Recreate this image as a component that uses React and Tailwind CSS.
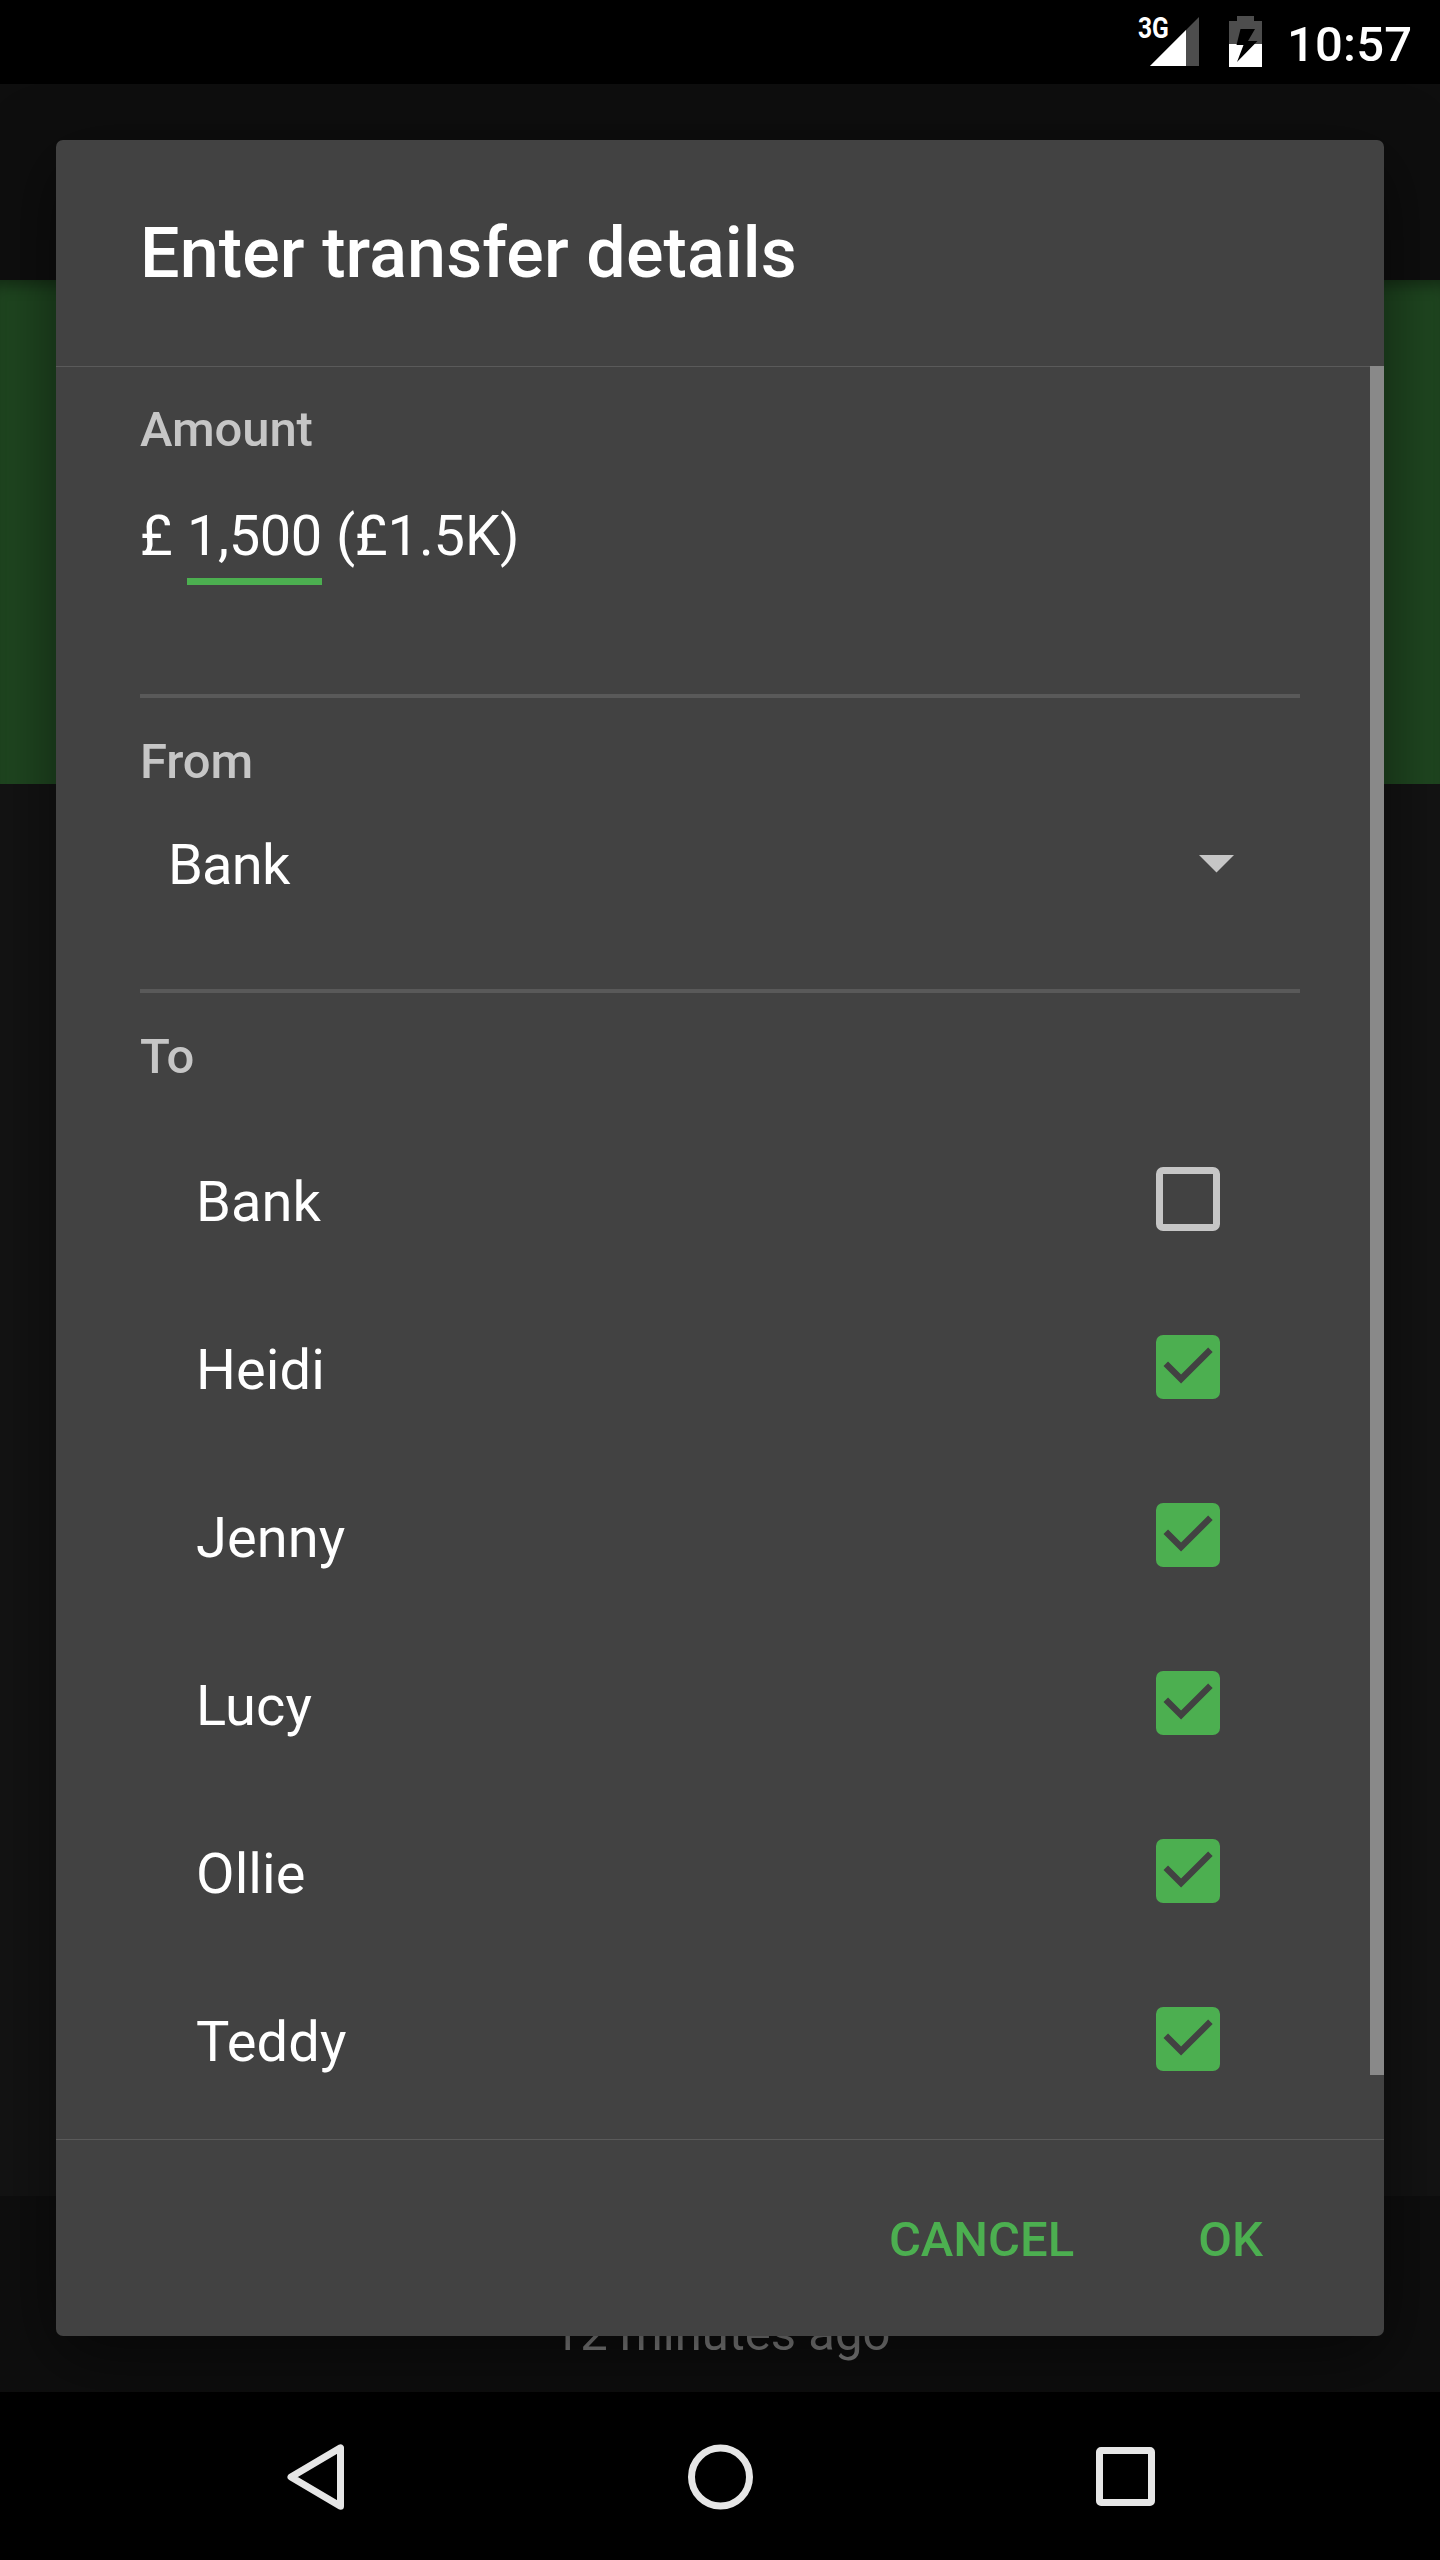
const people = [
  { name: "Bank", checked: false },
  { name: "Heidi", checked: true },
  { name: "Jenny", checked: true },
  { name: "Lucy", checked: true },
  { name: "Ollie", checked: true },
  { name: "Teddy", checked: true },
];

function StatusBar() {
  return (
    <header className="flex h-[84px] items-start bg-black pl-[1139px] text-white">
      <div className="relative h-[84px] w-[60px]">
        <span className="absolute -left-px top-[11px] origin-left scale-x-[0.82] text-[30px] font-bold leading-[34px]">3G</span>
        <svg className="absolute left-[11px] top-[17px]" width="49" height="49" viewBox="0 0 49 49">
          <path d="M49 0V49H0Z" fill="#4d4d4d" />
          <path d="M36 13V49H0Z" fill="#fff" />
        </svg>
      </div>
      <svg className="ml-[30px] mt-[16px]" width="33" height="51" viewBox="0 0 33 51">
        <path d="M8 0H25V5H33V28H0V5H8Z" fill="#4d4d4d" />
        <path d="M0 28H33V51H0Z" fill="#fff" />
        <path d="M11.5 13H26L19 25H28.500L8 46L14.500 29H7.500Z" fill="#000" />
      </svg>
      <span className="ml-[25px] mt-[16px] text-[49px] font-medium leading-[58px] tracking-[0.2px]">10:57</span>
    </header>
  );
}

function Checkbox({ checked }) {
  if (!checked) {
    return <span className="block size-[64px] rounded-[7px] border-[7px] border-[#c6c6c6]" />;
  }
  return (
    <svg width="64" height="64" viewBox="0 0 18 18">
      <rect width="18" height="18" rx="2" fill="#4caf50" />
      <path d="M2.750 8.100L7.050 12.400L15.300 4.150" fill="none" stroke="#424242" strokeWidth="1.8" />
    </svg>
  );
}

function Label({ children }) {
  return <h2 className="text-[49px] font-medium leading-[58px] tracking-[-0.1px] text-[#c6c6c6]">{children}</h2>;
}

function Dialog() {
  return (
    <section className="absolute left-[56px] top-[140px] flex h-[2196px] w-[1328px] flex-col rounded-[7px] bg-[#424242] text-white shadow-[0_20px_70px_rgba(0,0,0,0.5)]">
      <h1 className="h-[226px] shrink-0 pl-[84px] pt-[72px] text-[70px] font-medium leading-[82px] tracking-[0.12px]">Enter transfer details</h1>
      <div className="flex h-[1774px] shrink-0 border-y border-[#5a5a5a]">
        <div className="flex-1 pl-[84px]">
          <div className="h-[331px] w-[1160px] border-b-4 border-[#595959] pt-[34px]">
            <Label>Amount</Label>
            <div className="flex pt-[44px] text-[56px] leading-[66px]">
              <span className="w-[47px]">£</span>
              <span className="h-[82px] w-[135px] border-b-[7px] border-[#4caf50] tracking-[-0.4px]">1,500</span>
              <span className="pl-[14px] tracking-[-0.1px]">(£1.5K)</span>
            </div>
          </div>
          <div className="h-[295px] w-[1160px] border-b-4 border-[#595959] pt-[35px]">
            <Label>From</Label>
            <div className="flex items-start justify-between pl-[28px] pr-[66px] pt-[41px]">
              <span className="text-[56px] leading-[66px] tracking-[-0.8px]">Bank</span>
              <svg className="mt-[23px]" width="35" height="18" viewBox="0 0 35 18">
                <path d="M0 0H35L17.500 17.500Z" fill="#c6c6c6" />
              </svg>
            </div>
          </div>
          <div className="pt-[35px]">
            <Label>To</Label>
            <ul className="w-[1160px] pl-[56px] pr-[80px] pt-[29px]">
              {people.map((p) => (
                <li key={p.name} className="flex h-[168px] items-center justify-between">
                  <span className="pt-[5px] text-[56px] leading-[66px] tracking-[0.1px]">{p.name}</span>
                  <Checkbox checked={p.checked} />
                </li>
              ))}
            </ul>
          </div>
        </div>
        <div className="-mt-px h-[1709px] w-[14px] bg-[#898989]" />
      </div>
      <footer className="flex justify-end pr-[121px] pt-[71px] text-[49px] font-medium leading-[58px] text-[#4caf50]">
        <button className="mr-[124px]">CANCEL</button>
        <button>OK</button>
      </footer>
    </section>
  );
}

function NavBar() {
  return (
    <nav className="flex h-[168px] items-center bg-black pl-[287px] pt-px">
      <svg width="58" height="66" viewBox="0 0 58 66" fill="none" stroke="#e6e6e6" strokeWidth="7" strokeLinejoin="round">
        <path d="M53.500 3.800V62.200L4 33Z" />
      </svg>
      <svg className="ml-[342px]" width="66" height="66" viewBox="0 0 66 66" fill="none" stroke="#e6e6e6" strokeWidth="7">
        <circle cx="33.500" cy="33" r="29" />
      </svg>
      <span className="ml-[343px] size-[59px] rounded-[5px] border-[7px] border-[#e6e6e6]" />
    </nav>
  );
}

export default function App() {
  return (
    <main className="relative flex h-[2560px] w-[1440px] flex-col overflow-hidden bg-[#131313] font-['Roboto',sans-serif]">
      <StatusBar />
      <div className="h-[196px] bg-[#0e0e0e]" />
      <div className="h-[504px] bg-[#1f4620] shadow-[inset_0_14px_14px_-8px_rgba(0,0,0,0.35)]" />
      <div className="flex-1" />
      <div className="h-[196px] bg-[#0e0e0e] pl-[3px] pt-[109px] text-center text-[49px] leading-[58px] text-[#808080]">12 minutes ago</div>
      <div className="h-[168px]" />
      <Dialog />
      <div className="absolute inset-x-0 bottom-0">
        <NavBar />
      </div>
    </main>
  );
}
